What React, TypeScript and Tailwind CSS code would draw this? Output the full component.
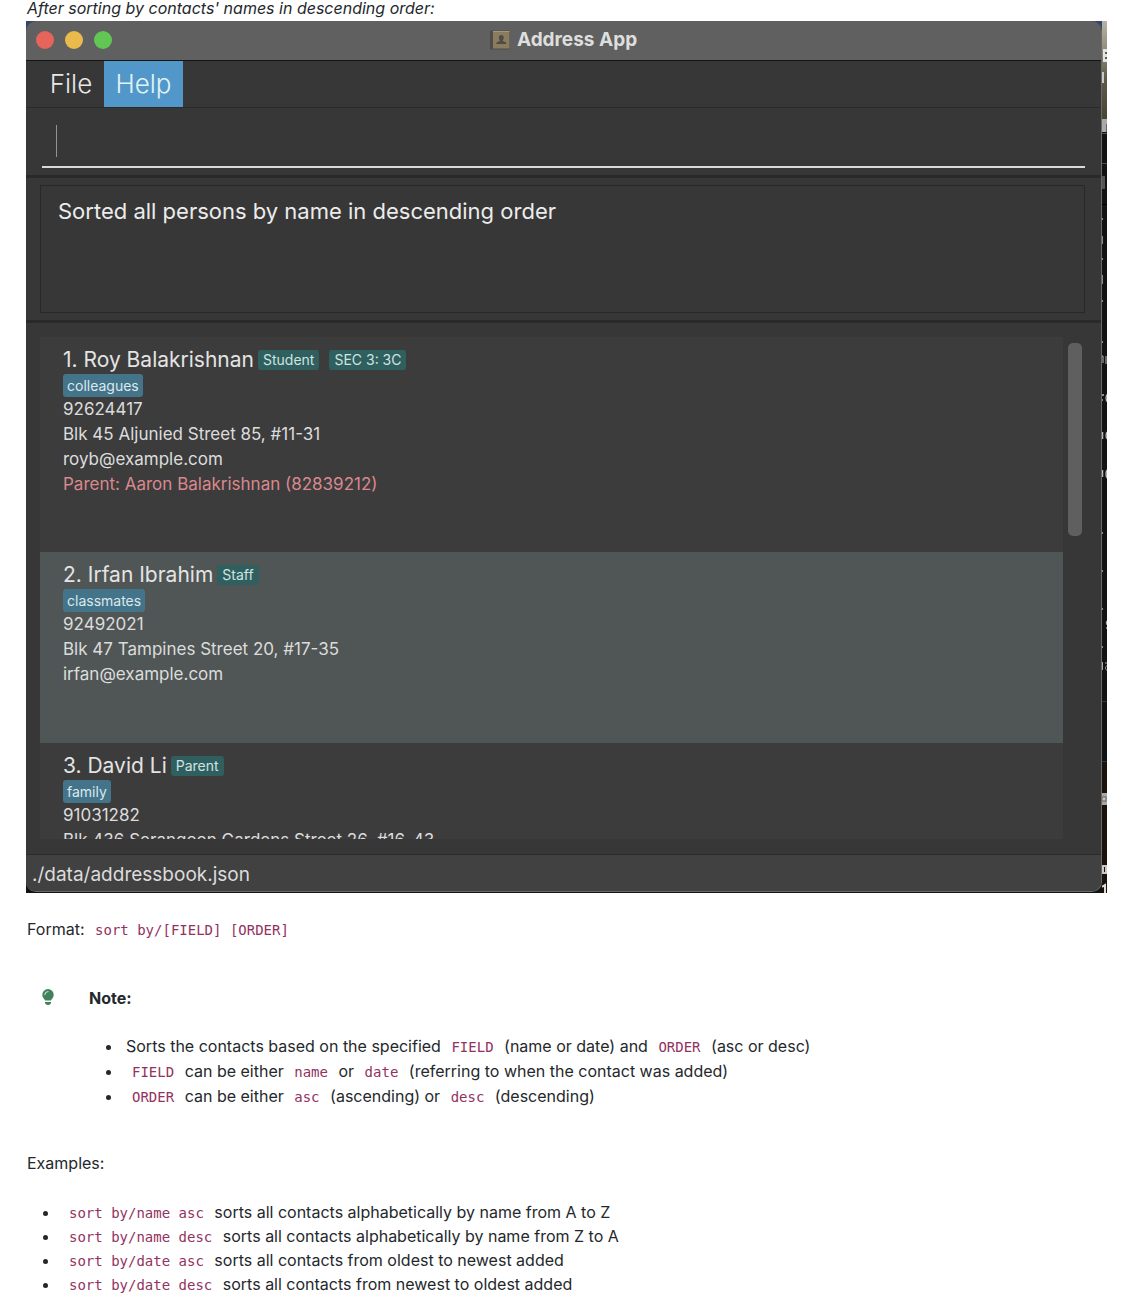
import React from "react";

type Person = {
  id: number;
  name: string;
  roles: string[];
  tag: string;
  phone: string;
  address: string;
  email?: string;
  parent?: string;
};

const people: Person[] = [
  {
    id: 1,
    name: "Roy Balakrishnan",
    roles: ["Student", "SEC 3: 3C"],
    tag: "colleagues",
    phone: "92624417",
    address: "Blk 45 Aljunied Street 85, #11-31",
    email: "royb@example.com",
    parent: "Parent: Aaron Balakrishnan (82839212)",
  },
  {
    id: 2,
    name: "Irfan Ibrahim",
    roles: ["Staff"],
    tag: "classmates",
    phone: "92492021",
    address: "Blk 47 Tampines Street 20, #17-35",
    email: "irfan@example.com",
  },
  {
    id: 3,
    name: "David Li",
    roles: ["Parent"],
    tag: "family",
    phone: "91031282",
    address: "Blk 436 Serangoon Gardens Street 26, #16-43",
  },
];

const examples = [
  ["sort by/name asc", "sorts all contacts alphabetically by name from A to Z"],
  ["sort by/name desc", "sorts all contacts alphabetically by name from Z to A"],
  ["sort by/date asc", "sorts all contacts from oldest to newest added"],
  ["sort by/date desc", "sorts all contacts from newest to oldest added"],
];

function Code({ children }: { children: React.ReactNode }) {
  return (
    <code className="px-[6px] font-['DejaVu_Sans_Mono',monospace] text-[14px] leading-none text-[#92325f]">
      {children}
    </code>
  );
}

function Item({ children }: { children: React.ReactNode }) {
  return (
    <li className="before:mr-[15px] before:-ml-5 before:inline-block before:size-[5px] before:rounded-full before:bg-[#24282c] before:align-middle before:content-['']">
      {children}
    </li>
  );
}

function BookIcon() {
  return (
    <svg width="20" height="20" viewBox="0 0 20 20" aria-hidden="true">
      <rect x="0" y="0.5" width="20" height="19" rx="1" fill="#4f4c47" />
      <rect x="3" y="1" width="16.500" height="17.500" fill="#8a7c5f" />
      <rect x="3" y="1" width="16.500" height="1" fill="#a39677" />
      <path
        d="M11.300 5c1.600 0 2.500 1.100 2.500 2.700 0 1-.4 1.900-1 2.500v.9c1.600.5 3.600 1.200 3.600 2.900H6.200c0-1.700 2-2.400 3.600-2.900v-.9c-.6-.6-1-1.500-1-2.500C8.800 6.100 9.700 5 11.300 5z"
        fill="#514c43"
      />
    </svg>
  );
}

function BulbIcon() {
  return (
    <svg width="12" height="16" viewBox="0 0 12 16" aria-hidden="true">
      <path
        d="M6 0a5.700 5.700 0 0 0-5.700 5.700c0 1.500.6 2.700 1.400 3.700.7.800 1.100 1.400 1.300 2.200h6c.2-.8.6-1.400 1.300-2.200.8-1 1.400-2.200 1.400-3.700A5.700 5.700 0 0 0 6 0z"
        fill="#40835a"
      />
      <path d="M2.700 5.800A3.300 3.300 0 0 1 6 2.500" stroke="#d5e8dc" strokeWidth="1" fill="none" strokeLinecap="round" />
      <path d="M3 13h6v.6c0 1.300-1.200 2.400-3 2.400s-3-1.100-3-2.400z" fill="#40835a" />
    </svg>
  );
}

/* Sliver of the desktop that shows past the window's right edge. */
function DesktopEdge() {
  const marks = [
    [197, 2], [215, 8], [237, 2], [254, 9], [279, 2], [320, 2], [378, 2], [416, 2],
    [454, 2], [511, 2], [549, 2], [587, 2], [625, 2],
  ];
  return (
    <svg width="5" height="872" viewBox="0 0 5 872" aria-hidden="true" className="block shrink-0">
      <defs>
        <linearGradient id="wall" x1="0" y1="0" x2="0" y2="1">
          <stop offset="0" stopColor="#b9b3a5" />
          <stop offset="0.35" stopColor="#8a8474" />
          <stop offset="0.6" stopColor="#5f5848" />
          <stop offset="1" stopColor="#4a4436" />
        </linearGradient>
      </defs>
      <rect width="6" height="872" fill="#121314" />
      <rect width="6" height="98" fill="url(#wall)" />
      <rect x="1" y="28" width="5" height="13" fill="#e4e4e2" />
      <path d="M3 32h3M3 37h3" stroke="#5c5a52" strokeWidth="2" />
      <rect x="0" y="51" width="2" height="11" fill="#c9c9c9" />
      <rect x="0" y="98" width="6" height="13" fill="#a9a9a9" />
      <rect x="4" y="103" width="1" height="8" fill="#666" />
      <rect x="0" y="112" width="6" height="1" fill="#555" />
      <rect x="0" y="142" width="6" height="1" fill="#4b4d50" />
      <rect x="0" y="155" width="3" height="13" fill="#555" />
      <rect x="0" y="183" width="6" height="1" fill="#000" />
      {marks.map(([y, h]) => (
        <rect key={y} x="0" y={y} width="1" height={h} fill="#8c8c8c" />
      ))}
      <path d="M0 335h1v7M4 335v8" stroke="#bbb" fill="none" />
      <path d="M0 374h2M6 373c-2.500 1-2.500 7 0 8" stroke="#bbb" fill="none" strokeWidth="1.500" />
      <path d="M0.500 411v7M6 411c-2.500 0-2.500 7 0 7" stroke="#bbb" fill="none" strokeWidth="1.500" />
      <path d="M0.500 449v7M6 449c-2.500 0-2.500 8 0 8" stroke="#bbb" fill="none" strokeWidth="1.500" />
      <path d="M6 600c-2 0-2 3 0 4M4 607h2" stroke="#aaa" fill="none" strokeWidth="1.500" />
      <path d="M0.500 641v8M3 642h2M5 645c-2 0-2 4 0 4" stroke="#aaa" fill="none" />
      <rect x="0" y="680" width="6" height="1" fill="#33363a" />
      <rect x="0" y="740" width="6" height="1" fill="#33363a" />
      <rect x="0" y="742" width="6" height="130" fill="#1c1209" />
      <rect x="0" y="772" width="6" height="12" fill="#a8a8a8" />
      <rect x="0" y="776" width="4" height="4" fill="#c4c4c4" stroke="#666" />
      <rect x="1" y="845" width="3" height="7" fill="none" stroke="#c8c8c8" strokeWidth="2" />
      <path d="M0 866l3-2v8" fill="none" stroke="#ddd" strokeWidth="2" />
    </svg>
  );
}

function PersonCard({ person }: { person: Person }) {
  const selected = person.id === 2;
  return (
    <li
      className={
        selected
          ? "bg-[#505655] pt-[10px] pr-4 pb-[56px] pl-[23px]"
          : "bg-[#3c3c3c] pt-[10px] pr-4 pb-[55px] pl-[23px]"
      }
    >
      <div className="flex h-[26px] items-center">
        <h2 className="text-[21px] leading-[26px] text-[#e4e4e4]">
          {person.id}. {person.name}
        </h2>
        <div className="ml-1 flex gap-[10px]">
          {person.roles.map((role) => (
            <span key={role} className="rounded-[3px] bg-[#2f5f5e] px-[5px] text-[14px] leading-5 text-[#cfe3e1]">
              {role}
            </span>
          ))}
        </div>
      </div>
      <div className="flex h-6 items-center">
        <span className="rounded-[3px] bg-[#43748a] px-1 text-[14px] leading-[23px] text-[#dde8ec]">{person.tag}</span>
      </div>
      <div className="text-[17px] leading-[25px] text-[#dcdcdc]">
        <p>{person.phone}</p>
        <p>{person.address}</p>
        {person.email && <p>{person.email}</p>}
        {person.parent && <p className="text-[#d9898d]">{person.parent}</p>}
      </div>
    </li>
  );
}

function AddressApp() {
  return (
    <div className="flex overflow-hidden bg-linear-to-b from-[#34466e] from-1% to-[#121314] to-2% font-['Inter',sans-serif]">
      <div className="mb-px flex min-w-0 flex-1 flex-col overflow-hidden rounded-[10px] border-r border-b border-[#696969] bg-[#373737]">
        <header className="grid h-[40px] grid-cols-[1fr_auto_1fr] items-center border-b border-[#151515] bg-[#606060] px-[10px] pb-px">
          <div className="flex gap-[11px]">
            <button aria-label="Close" className="size-[18px] rounded-full bg-[#e5655b]" />
            <button aria-label="Minimize" className="size-[18px] rounded-full bg-[#eabb4c]" />
            <button aria-label="Zoom" className="size-[18px] rounded-full bg-[#62c655]" />
          </div>
          <div className="flex items-center gap-[7px] pb-px">
            <BookIcon />
            <h1 className="text-[19px] leading-6 font-bold text-[#dedede]">Address App</h1>
          </div>
        </header>
        <nav className="flex h-[47px] border-b border-[#2a2a2a] pl-3 text-[26px] font-light text-[#e8e8e8]">
          <button className="w-[66px] text-center">File</button>
          <button className="w-[79px] bg-[#5297c9] text-center text-[#e0f4f4]">Help</button>
        </nav>
        <div className="h-[70px] border-b-[3px] border-[#292929] px-4 pt-[7px]">
          <div className="flex h-[53px] items-center border-b-2 border-[#d8d8d8] pl-[14px]">
            <div className="h-8 w-px bg-[#929292]" />
            <input aria-label="Command" className="h-8 flex-1 bg-transparent pl-1 text-[22px] text-white outline-none" />
          </div>
        </div>
        <div className="border-b-[3px] border-[#292929] pt-[7px] pr-4 pb-[7px] pl-[14px]">
          <output className="block h-32 border border-[#282828] px-[17px] pt-3 text-[22px] leading-[26px] text-[#ececec]">
            Sorted all persons by name in descending order
          </output>
        </div>
        <div className="flex pt-[14px] pr-[19px] pb-[15px] pl-[14px]">
          <ul className="h-[502px] flex-1 overflow-hidden">
            {people.map((p) => (
              <PersonCard key={p.id} person={p} />
            ))}
          </ul>
          <div className="ml-[5px] pt-[6px]">
            <div className="h-[193px] w-[14px] rounded-[5px] bg-[#5f5f5f]" />
          </div>
        </div>
        <footer className="border-t border-[#2a2a2a] bg-[#414141] px-[6px] pt-[7px] pb-[3px] text-[19px] leading-[26px] text-[#dcdcdc]">
          ./data/addressbook.json
        </footer>
      </div>
      <DesktopEdge />
    </div>
  );
}

export default function App() {
  return (
    <main className="bg-white pr-[21px] pb-3 pl-[26px] font-['Inter',sans-serif] text-[16px] leading-6 text-[#24282c]">
      <p className="-mt-1 h-[25px] pl-px italic">After sorting by contacts' names in descending order:</p>
      <AddressApp />
      <p className="mt-6 pl-px">
        Format: <Code>sort by/[FIELD] [ORDER]</Code>
      </p>
      <section className="mt-[45px] flex pl-4">
        <div className="w-[47px] pt-[3px]">
          <BulbIcon />
        </div>
        <div>
          <p className="font-bold">Note:</p>
          <ul className="mt-6 pl-[37px] leading-[25px]">
            <Item>
              Sorts the contacts based on the specified <Code>FIELD</Code> (name or date) and <Code>ORDER</Code> (asc or desc)
            </Item>
            <Item>
              <Code>FIELD</Code> can be either <Code>name</Code> or <Code>date</Code> (referring to when the contact was added)
            </Item>
            <Item>
              <Code>ORDER</Code> can be either <Code>asc</Code> (ascending) or <Code>desc</Code> (descending)
            </Item>
          </ul>
        </div>
      </section>
      <p className="mt-[42px] pl-px">Examples:</p>
      <ul className="mt-[25px] pl-[37px]">
        {examples.map(([cmd, text]) => (
          <Item key={cmd}>
            <Code>{cmd}</Code> {text}
          </Item>
        ))}
      </ul>
    </main>
  );
}
